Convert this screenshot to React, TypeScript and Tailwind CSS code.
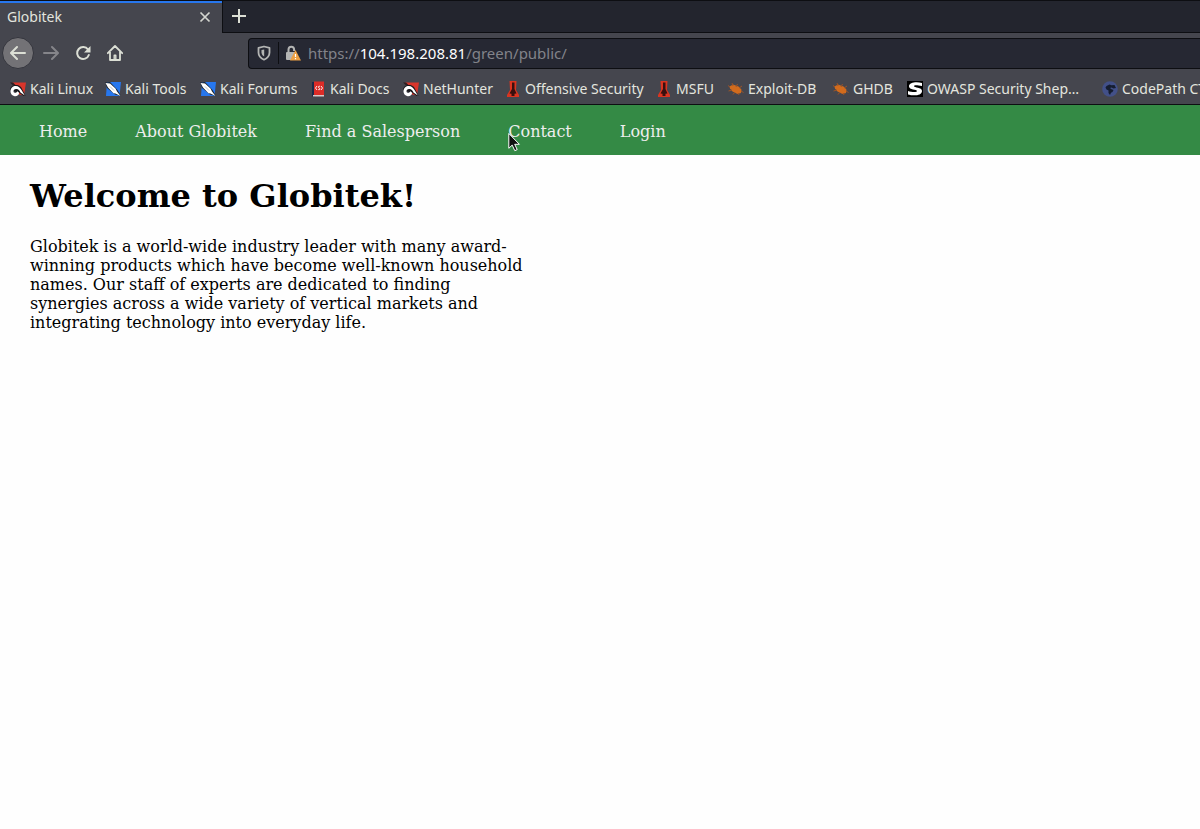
import type { ReactNode } from 'react';

const iconClass = 'size-4 shrink-0';

function DragonIcon() {
  return (
    <svg viewBox="0 0 16 16" className={iconClass} aria-hidden="true">
      <path d="M2 1.500h14l-2 13-5-1z" fill="#d8352b" />
      <path d="M0 1.500l3 3 3 0-3-3z" fill="#2b1f22" />
      <path d="M0 9C0 4 7.500 2.200 11 6l4.500 8.500-2 .5-4-3" fill="#18181c" />
      <path d="M4 15C-1 13.500-.5 6 4.500 5c3.500-.6 5.500 1.200 7 4l3.300 5.500-4.300-3C9.500 9 8 7.700 6 8c-2.300.3-3.200 2.300-2 3.500 1.200 1 2.700.3 3.200-1.200L9.200 11.700C9 14.200 6.500 15.700 4 15z" fill="#fff" />
    </svg>
  );
}

function KnifeIcon() {
  return (
    <svg viewBox="0 0 16 16" className={iconClass} aria-hidden="true">
      <path d="M2 1h14l-1.500 14H1z" fill="#2777ee" />
      <path d="M0 1.500l5-.5 7.500 8L16 15l-6-1.500L2 7z" fill="#1c2530" />
      <path d="M.5 2l4.500.5 5.500 5 1.500 3L15.500 15l-5-2.500-2-.3L3 6.500z" fill="#fff" />
      <path d="M5 5.500l4 4" stroke="#9aa4b0" strokeWidth=".7" />
    </svg>
  );
}

function DocsIcon() {
  return (
    <svg viewBox="0 0 16 16" className={iconClass} aria-hidden="true">
      <path d="M2 1h3v14.500H2z" fill="#1a2a49" />
      <path d="M4 .500h10V14H4z" fill="#dc2c27" />
      <path d="M3 14h11v1.500H3z" fill="#d8c9c9" />
      <path d="M7 5L5.500 7 7 9M11 5l1.500 2L11 9M10 5.500c-1-.8-2 .200-1.500 1l1.300 1c.5.8-.5 1.800-1.600 1" fill="none" stroke="#fff" strokeWidth=".9" />
    </svg>
  );
}

function TowerIcon() {
  return (
    <svg viewBox="0 0 16 16" className={iconClass} aria-hidden="true">
      <path d="M4.500 0h7l-.5 9 3 5v2H2v-2l3-5z" fill="#da3420" />
      <path d="M7 1.500h2.500L9.500 8l2 4.500-2 .3V15h-3v-2.200l-2-.3L7 8z" fill="#39100f" />
    </svg>
  );
}

function BugIcon() {
  return (
    <svg viewBox="0 0 16 16" className={iconClass} aria-hidden="true">
      <path d="M1.500 5.500L5 3.500l6 2.200 2.500 3-.5 3.300-3.500 1-5-2.500-2.500-3z" fill="#d16b1d" />
      <path d="M5 5L4 2M8 6l1.500-3M11 7l3-2M4 9l-3.500 1M7 11l-2 2.500M10 12l1 2M13 10l2.500 1.500M2 6L0 4.500" stroke="#9b5428" strokeWidth="1" />
    </svg>
  );
}

function ShepherdIcon() {
  return (
    <svg viewBox="0 0 16 16" className={iconClass} aria-hidden="true">
      <path d="M0 0h16v16H0z" fill="#000" />
      <path d="M15 5V2C10 .700 2 1 2 5.500 2 9 10 8.200 10 10c0 1.700-6 1-9 0v3.500c5 1.500 14 1.500 14-3.500C15 6 7 7 7 5c0-1.300 4-.8 8 0z" fill="#fff" />
    </svg>
  );
}

function GlobeIcon() {
  return (
    <svg viewBox="0 0 16 16" className={iconClass} aria-hidden="true">
      <circle cx="8" cy="8" r="7.800" fill="#425088" />
      <path d="M4.500 5l3-1.500 2 .8 3-.3 1.500 3-2.500.5-2-1-1.500.5 1.500 1.200 2 .8-1 2-1.500.8-1 2.200-1.500-2V9.500L4.500 8.500 3.500 6.500z" fill="#151d30" />
    </svg>
  );
}

type Bookmark = { label: string; icon: ReactNode; width: string };

const bookmarks: Bookmark[] = [
  { label: 'Kali Linux', icon: <DragonIcon />, width: 'w-[95px]' },
  { label: 'Kali Tools', icon: <KnifeIcon />, width: 'w-[95px]' },
  { label: 'Kali Forums', icon: <KnifeIcon />, width: 'w-[110px]' },
  { label: 'Kali Docs', icon: <DocsIcon />, width: 'w-[93px]' },
  { label: 'NetHunter', icon: <DragonIcon />, width: 'w-[102px]' },
  { label: 'Offensive Security', icon: <TowerIcon />, width: 'w-[151px]' },
  { label: 'MSFU', icon: <TowerIcon />, width: 'w-[72px]' },
  { label: 'Exploit-DB', icon: <BugIcon />, width: 'w-[105px]' },
  { label: 'GHDB', icon: <BugIcon />, width: 'w-[74px]' },
  { label: 'OWASP Security Shep…', icon: <ShepherdIcon />, width: 'w-[195px]' },
  { label: 'CodePath CTF', icon: <GlobeIcon />, width: 'w-[130px]' },
];

const links = ['Home', 'About Globitek', 'Find a Salesperson', 'Contact', 'Login'];

function TabStrip() {
  return (
    <div className="flex h-8 bg-[#23252e]">
      <div className="flex w-[222px] items-center justify-between border-t-2 border-[#2777ee] bg-[#45464e] pr-2.5 pb-0.5 pl-[7px]">
        <span className="text-sm">Globitek</span>
        <button type="button" aria-label="Close tab" className="flex size-3.5 items-center justify-center">
          <svg viewBox="0 0 14 14" className="size-3.5" aria-hidden="true">
            <path d="M2.500 2.500l9 9M11.500 2.500l-9 9" stroke="#d3d5cf" strokeWidth="1.700" />
          </svg>
        </button>
      </div>
      <div className="flex-1 border-b border-l border-[#0d0e12]">
        <button type="button" aria-label="New tab" className="flex size-8 items-center justify-center pb-0.5">
          <svg viewBox="0 0 16 16" className="size-4" aria-hidden="true">
            <path d="M8 1v14M1 8h14" stroke="#dcdfd5" strokeWidth="2" />
          </svg>
        </button>
      </div>
    </div>
  );
}

function Toolbar() {
  return (
    <div className="flex h-10 items-center pl-0.5">
      <button type="button" aria-label="Back" className="mr-px flex size-8 items-center justify-center rounded-full border border-[#34353d] bg-[#737276]">
        <svg viewBox="0 0 16 16" className="size-4" fill="none" stroke="#dcdfd5" strokeWidth="2" strokeLinecap="round" strokeLinejoin="round" aria-hidden="true">
          <path d="M15 8H1.500M7 2L1 8l6 6" />
        </svg>
      </button>
      <button type="button" aria-label="Forward" className="flex size-8 items-center justify-center">
        <svg viewBox="0 0 16 16" className="size-4" fill="none" stroke="#85858a" strokeWidth="2" strokeLinecap="round" strokeLinejoin="round" aria-hidden="true">
          <path d="M1 8h13.500M9 2l6 6-6 6" />
        </svg>
      </button>
      <button type="button" aria-label="Reload" className="flex size-8 items-center justify-center">
        <svg viewBox="0 0 16 16" className="size-4" fill="none" stroke="#dcdfd5" strokeWidth="2" aria-hidden="true">
          <path d="M13 4.500A6 6 0 1 0 13.800 10" strokeLinecap="round" />
          <path d="M15.500 1v6.500H9z" fill="#dcdfd5" stroke="none" />
        </svg>
      </button>
      <button type="button" aria-label="Home" className="flex size-8 items-center justify-center">
        <svg viewBox="0 0 16 16" className="size-4" fill="none" stroke="#dcdfd5" strokeWidth="1.800" strokeLinejoin="round" aria-hidden="true">
          <path d="M.8 8.200L8 1l7.200 7.200M3 7v8h10V7" strokeLinecap="round" />
          <path d="M7.200 15v-4.800h1.600V15" strokeWidth="1.400" />
        </svg>
      </button>
      <div className="ml-[117px] flex h-[31px] flex-1 items-center rounded-l border border-r-0 border-[#0d0e12] bg-[#262833]">
        <button type="button" aria-label="Tracking protection" className="flex w-[29px] items-center justify-center">
          <svg viewBox="0 0 16 16" className="size-4" aria-hidden="true">
            <path d="M8 1.500l5.500 1.400v4.600c0 3.400-2.200 5.700-5.500 7.200-3.300-1.500-5.500-3.800-5.500-7.200V2.900z" fill="none" stroke="#b4b5b4" strokeWidth="1.800" strokeLinejoin="round" />
            <path d="M8.200 4.500v7C6.400 10.400 5.500 9 5.500 7.200V5.100z" fill="#b4b5b4" />
          </svg>
        </button>
        <span className="h-[22px] w-px bg-[#0d0e12]" />
        <button type="button" aria-label="Connection not secure" className="ml-1.5 flex w-4 items-center justify-center">
          <svg viewBox="0 0 16 16" className="size-4" aria-hidden="true">
            <path d="M3.500 8V4.500a2.800 2.800 0 0 1 5.600 0V6" fill="none" stroke="#b4b5b4" strokeWidth="2" />
            <path d="M2 7h8.500v8H2a1 1 0 0 1-1-1V8a1 1 0 0 1 1-1z" fill="#b4b5b4" />
            <path d="M10.500 5L16 15.500H5z" fill="#eda044" />
            <path d="M10.500 9v3M10.500 13v1.300" stroke="#fff" strokeWidth="1.200" />
          </svg>
        </button>
        <a href="#address" className="ml-[7px] text-[15px] text-[#82838a]">
          https://<span className="text-white">104.198.208.81</span>/green/public/
        </a>
      </div>
    </div>
  );
}

function Pointer() {
  return (
    <svg viewBox="0 0 13 20" className="pointer-events-none absolute top-[27px] left-[508px] h-5 w-[13px]" aria-hidden="true">
      <path d="M.8 1.500v14.800l3.400-3.200 2.600 5.600 2.400-1.100-2.500-5.300h4.700z" fill="#111" stroke="#fff" strokeWidth="1" />
    </svg>
  );
}

export default function App() {
  return (
    <div className="min-h-screen overflow-x-hidden bg-[#fefefe]">
      <header className="border-t border-b border-[#0d0e12] bg-[#45464e] font-['Noto_Sans',sans-serif] text-[#e3e5df]">
        <TabStrip />
        <Toolbar />
        <nav aria-label="Bookmarks" className="flex h-[31px] items-center overflow-hidden pl-2.5 text-sm whitespace-nowrap">
          {bookmarks.map(({ label, icon, width }) => (
            <a key={label} href="#bookmark" className={`flex shrink-0 items-center gap-1 ${width}`}>
              {icon}
              {label}
            </a>
          ))}
        </nav>
      </header>
      <div className="font-['DejaVu_Serif',serif] text-base">
        <nav aria-label="Main" className="relative bg-[#348a45] px-[39px] pt-[15px] pb-[11px] text-[#eeeeee]">
          <ul className="flex gap-12">
            {links.map((label) => (
              <li key={label}>
                <a href="#page">{label}</a>
              </li>
            ))}
          </ul>
          <Pointer />
        </nav>
        <main className="px-[30px] pt-[22px] text-black">
          <h1 className="text-[32px] leading-[38px] font-bold">Welcome to Globitek!</h1>
          <p className="mt-[22px] max-w-[500px] leading-[19px]">
            Globitek is a world-wide industry leader with many award-winning products which have become well-known household
            names. Our staff of experts are dedicated to finding synergies across a wide variety of vertical markets and
            integrating technology into everyday life.
          </p>
        </main>
      </div>
    </div>
  );
}
